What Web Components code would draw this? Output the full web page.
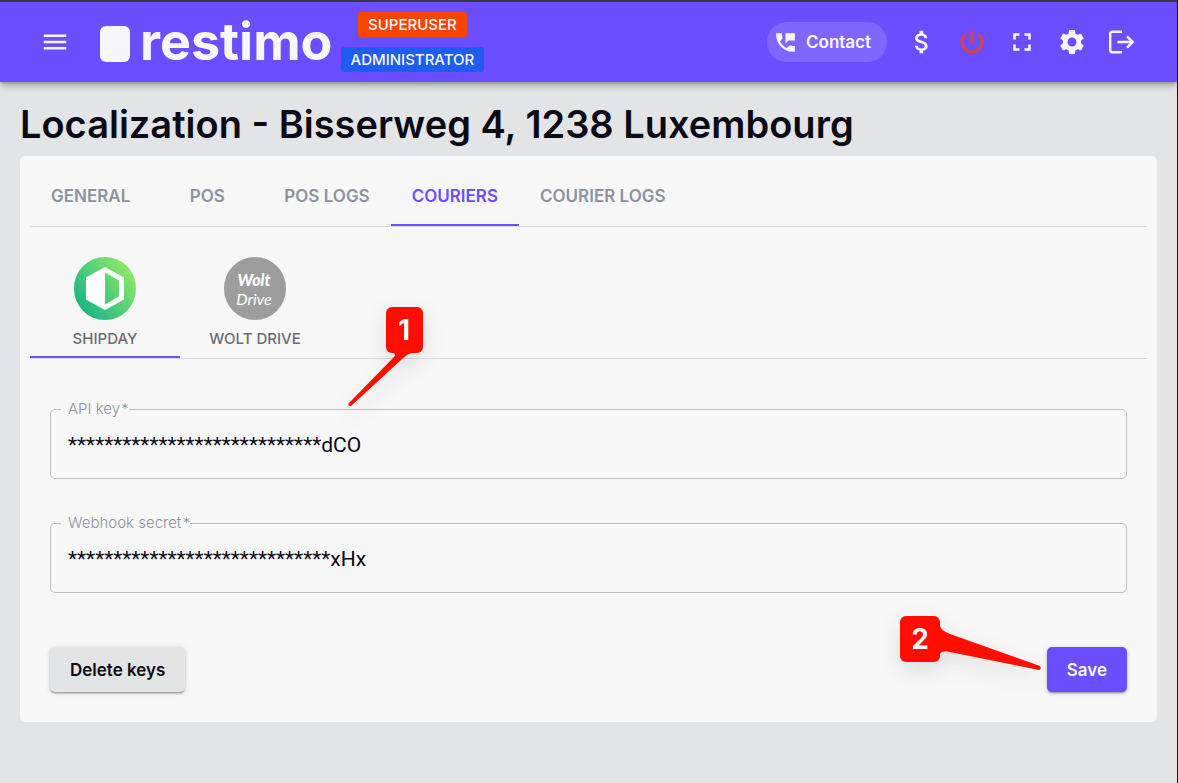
<!DOCTYPE html>
<html lang="en">
<head>
<meta charset="utf-8">
<title>Restimo – Localization</title>
<style>
  html { background: #e3e4e6; }
  body {
    margin: 0;
    font-family: Inter, "Liberation Sans", sans-serif;
    color: #0c0a17;
    --brand: #6b4eff;
    --panel: #f7f7f7;
    --grey: #e3e4e6;
    --muted: #8c93a0;
  }
</style>
</head>
<body>
<app-shell>
  <app-header slot="header">
    <role-badge tone="orange">SUPERUSER</role-badge>
    <role-badge tone="blue">ADMINISTRATOR</role-badge>
  </app-header>
  <page-title>Localization - Bisserweg 4, 1238 Luxembourg</page-title>
  <settings-card>
    <tab-bar slot="tabs">
      <tab-item>GENERAL</tab-item>
      <tab-item>POS</tab-item>
      <tab-item>POS LOGS</tab-item>
      <tab-item selected>COURIERS</tab-item>
      <tab-item>COURIER LOGS</tab-item>
    </tab-bar>
    <tab-bar slot="tabs">
      <courier-tab selected label="SHIPDAY">
        <svg width="62" height="63" viewBox="0 0 62 63" aria-hidden="true">
          <defs><linearGradient id="g" x1="0.1" y1="0.85" x2="0.9" y2="0.2"><stop offset="0" stop-color="#17b584"/><stop offset="1" stop-color="#8be868"/></linearGradient></defs>
          <rect width="62" height="63" rx="31" fill="url(#g)"/>
          <path fill="#fff" fill-rule="evenodd" d="M31 10L50 20.500V42.500L31 53L12 42.500V20.500ZM31 15.500V47.500L45 39.500V23.500Z"/>
        </svg>
      </courier-tab>
      <courier-tab label="WOLT DRIVE"><wolt-logo></wolt-logo></courier-tab>
    </tab-bar>
    <outlined-field label="API key" value="****************************dCO">
      <step-callout number="1" direction="down"></step-callout>
    </outlined-field>
    <outlined-field label="Webhook secret" value="*****************************xHx"></outlined-field>
    <action-button slot="actions" kind="plain">Delete keys</action-button>
    <action-button slot="actions" kind="primary">Save
      <step-callout slot="callout" number="2" direction="right"></step-callout>
    </action-button>
  </settings-card>
</app-shell>

<script>
const define = (name, html, setup) => {
  const template = document.createElement('template');
  template.innerHTML = html;
  customElements.define(name, class extends HTMLElement {
    constructor() {
      super();
      this.attachShadow({ mode: 'open' }).append(template.content.cloneNode(true));
    }
    connectedCallback() { if (setup) setup(this, this.shadowRoot); }
  });
};

define('app-shell', `
  <style>
    :host { display: block; box-sizing: border-box; min-height: 100vh; border-top: 2px solid #3b3b4b; border-right: 1px solid #111; background: var(--grey); }
    main { padding: 20px 20px 60px; }
  </style>
  <slot name="header"></slot>
  <main><slot></slot></main>`);

define('app-header', `
  <style>
    :host { display: block; position: relative; background: var(--brand); color: #f7f7fb; box-shadow: 0 2px 4px -1px rgba(0,0,0,.3), 0 4px 8px rgba(0,0,0,.2); }
    header { display: flex; align-items: center; height: 80px; padding: 0 35px 0 40px; }
    .logo { display: flex; align-items: center; gap: 10px; margin-left: 30px; font-size: 52px; line-height: 64px; font-weight: 700; color: inherit; text-decoration: none; }
    .mark { width: 30px; height: 36px; margin-top: 4px; border-radius: 6px; background: #f7f7fb; }
    .roles { display: flex; flex-direction: column; align-items: center; gap: 10px; margin-left: 8px; }
    nav { display: flex; align-items: center; gap: 10px; margin-left: auto; }
    button { display: flex; align-items: center; justify-content: center; width: 40px; height: 40px; padding: 0; border: 0; border-radius: 20px; background: none; color: inherit; font: inherit; }
    button.menu { width: 30px; }
    button.contact { justify-content: flex-start; width: 120px; gap: 8px; margin-right: 5px; padding-left: 6px; background: #7f66ff; font-size: 17px; font-weight: 600; }
    svg { fill: currentColor; flex: none; }
    .power { color: #d4434a; }
  </style>
  <header>
    <button class="menu" aria-label="Menu"><svg width="30" height="30" viewBox="0 0 24 24"><path d="M3 18h18v-2H3v2zm0-5h18v-2H3v2zm0-7v2h18V6H3z"/></svg></button>
    <a class="logo" href="#"><span class="mark"></span><span>restimo</span></a>
    <div class="roles"><slot></slot></div>
    <nav>
      <button class="contact"><svg width="25" height="25" viewBox="0 0 24 24"><path d="M21 15.460l-5.270-.610-2.520 2.520c-2.830-1.440-5.150-3.750-6.590-6.590l2.530-2.530L8.540 3H3.030C2.450 13.180 10.820 21.550 21 20.970v-5.510zM12 3v10l3-3h6V3z"/></svg><span>Contact</span></button>
      <button aria-label="Billing"><svg width="30" height="30" viewBox="0 0 24 24"><path d="M11.800 10.900c-2.270-.590-3-1.200-3-2.150 0-1.090 1.010-1.850 2.700-1.850 1.780 0 2.440.850 2.500 2.100h2.210c-.070-1.720-1.120-3.300-3.210-3.810V3h-3v2.160c-1.940.420-3.500 1.680-3.500 3.610 0 2.310 1.910 3.460 4.700 4.130 2.500.600 3 1.480 3 2.410 0 .690-.490 1.790-2.700 1.790-2.060 0-2.870-.920-2.980-2.100h-2.200c.120 2.190 1.760 3.420 3.680 3.830V21h3v-2.150c1.950-.370 3.500-1.500 3.500-3.550 0-2.840-2.430-3.810-4.700-4.400z"/></svg></button>
      <button class="power" aria-label="Power"><svg width="30" height="30" viewBox="0 0 24 24" stroke="currentColor" stroke-width=".5"><path d="M13 3h-2v10h2V3zm4.830 2.170l-1.420 1.420C17.990 7.860 19 9.810 19 12c0 3.870-3.130 7-7 7s-7-3.130-7-7c0-2.190 1.010-4.140 2.580-5.420L6.170 5.170C4.230 6.820 3 9.260 3 12c0 4.970 4.030 9 9 9s9-4.030 9-9c0-2.740-1.230-5.180-3.170-6.830z"/></svg></button>
      <button aria-label="Full screen"><svg width="30" height="30" viewBox="0 0 24 24"><path d="M7 14H5v5h5v-2H7v-3zm-2-4h2V7h3V5H5v5zm12 7h-3v2h5v-5h-2v3zM14 5v2h3v3h2V5h-5z"/></svg></button>
      <button aria-label="Settings"><svg width="30" height="30" viewBox="0 0 24 24"><path d="M19.140 12.940c.040-.300.060-.610.060-.940 0-.320-.020-.640-.070-.940l2.030-1.580c.180-.140.230-.410.120-.610l-1.920-3.320c-.120-.220-.370-.290-.590-.220l-2.390.960c-.500-.380-1.030-.700-1.620-.940l-.360-2.540c-.040-.240-.240-.410-.480-.410h-3.840c-.240 0-.430.170-.470.410l-.360 2.540c-.590.240-1.130.570-1.620.940l-2.390-.960c-.220-.080-.470 0-.590.220L2.740 8.870c-.120.210-.080.470.120.610l2.030 1.580c-.050.300-.090.630-.090.940s.020.640.070.940l-2.030 1.580c-.180.140-.230.410-.120.610l1.920 3.320c.120.220.370.290.590.220l2.390-.960c.500.380 1.030.700 1.620.940l.360 2.540c.050.240.240.410.480.410h3.840c.240 0 .440-.170.470-.410l.360-2.540c.590-.240 1.130-.560 1.620-.940l2.390.960c.220.080.470 0 .590-.220l1.920-3.320c.120-.220.070-.470-.120-.610l-2.010-1.580zM12 15.600c-1.980 0-3.600-1.620-3.600-3.600s1.620-3.600 3.600-3.600 3.600 1.620 3.600 3.600-1.620 3.600-3.600 3.600z"/></svg></button>
      <button aria-label="Log out"><svg width="30" height="30" viewBox="0 0 30 30"><path fill="none" stroke="currentColor" stroke-width="2.400" d="M15 4.700H5.500Q3.200 4.700 3.200 7V23Q3.200 25.300 5.500 25.300H15M10.500 15H26M20 9.300L25.700 15L20 20.700"/></svg></button>
    </nav>
  </header>`);

define('role-badge', `
  <style>
    :host { display: block; height: 25px; padding: 0 10px; border-radius: 3px; color: #f7f7fb; font-size: 15px; line-height: 25px; font-weight: 500; background: #f84500; }
    :host([tone="blue"]) { background: #1f5cf0; }
  </style><slot></slot>`);

define('page-title', `
  <style>
    :host { display: block; }
    h1 { margin: 0; font-size: 38px; line-height: 44px; font-weight: 600; }
  </style><h1><slot></slot></h1>`);

define('settings-card', `
  <style>
    :host { display: block; margin-top: 10px; padding: 10px 10px 30px; border-radius: 5px; background: var(--panel); }
    .fields { display: flex; flex-direction: column; gap: 35px; padding: 41px 20px 0; }
    .actions { display: flex; justify-content: space-between; padding: 54px 20px 0; }
  </style>
  <slot name="tabs"></slot>
  <div class="fields"><slot></slot></div>
  <div class="actions"><slot name="actions"></slot></div>`);

define('tab-bar', `
  <style>:host { display: flex; border-bottom: 1px solid #d8d9db; }</style><slot></slot>`,
  host => host.setAttribute('role', 'tablist'));

define('tab-item', `
  <style>
    :host { display: block; }
    button { display: block; box-sizing: border-box; min-width: 112px; height: 60px; padding: 2px 21px 0; border: 0; border-bottom: 2px solid transparent; background: none; color: var(--muted); font: 600 17px/56px Inter, sans-serif; white-space: nowrap; }
    :host([selected]) button { border-color: var(--brand); color: var(--brand); }
  </style><button role="tab"><slot></slot></button>`);

define('courier-tab', `
  <style>
    :host { display: block; }
    button { display: flex; flex-direction: column; align-items: center; gap: 8px; box-sizing: border-box; width: 150px; height: 131px; padding: 30px 0 0; border: 0; border-bottom: 2px solid transparent; background: none; color: #6d6c74; font: 500 15px/22px Inter, sans-serif; }
    :host([selected]) button { border-color: var(--brand); }
    ::slotted(*) { display: block; }
  </style><button role="tab"><slot></slot><span></span></button>`,
  (host, root) => { root.querySelector('span').textContent = host.getAttribute('label'); });

define('wolt-logo', `
  <style>
    :host { display: block; box-sizing: border-box; width: 62px; height: 63px; padding: 13px 2px 0 0; border-radius: 31px; background: #9d9d9d; color: #fff; font: italic 400 16px/19px Lato, sans-serif; text-align: center; }
    b, span { display: block; }
    b { font-weight: 900; }
  </style><b>Wolt</b><span>Drive</span>`);

define('outlined-field', `
  <style>
    :host { display: block; position: relative; }
    fieldset { min-width: 0; margin: 0; padding: 0; border: 1px solid #bcbdc0; border-radius: 5px; }
    legend { margin-left: 10px; padding: 0 0 0 7px; color: var(--muted); font-size: 15px; line-height: 18px; font-weight: 300; }
    input { display: block; box-sizing: border-box; width: 100%; height: 60px; padding: 0 17px 7px; border: 0; outline: 0; background: none; color: inherit; font: 400 21px/28px Roboto, sans-serif; }
  </style>
  <fieldset><legend><label for="f"></label></legend><input id="f" type="text"></fieldset><slot></slot>`,
  (host, root) => {
    root.querySelector('label').textContent = host.getAttribute('label') + '\u200a*';
    root.querySelector('input').value = host.getAttribute('value');
  });

define('action-button', `
  <style>
    :host { display: block; position: relative; }
    button { display: block; height: 45px; padding: 2px 20px 0; border: 0; border-radius: 5px; background: var(--grey); color: inherit; font: 600 17px/43px Inter, sans-serif; box-shadow: 0 2px 2px -1px rgba(0,0,0,.35), 0 1px 4px rgba(0,0,0,.2); }
    :host([kind="primary"]) button { background: var(--brand); color: #f7f7fb; }
  </style><button type="button"><slot></slot></button><slot name="callout"></slot>`);

define('step-callout', `
  <style>
    :host { position: absolute; pointer-events: none; filter: drop-shadow(0 8px 10px rgba(0,0,0,.1)); }
    :host([direction="down"]) { left: 298px; top: -93px; }
    :host([direction="right"]) { right: 86px; top: -31px; }
    svg { display: block; fill: #ff0d00; }
    span { position: absolute; top: 0; width: 38px; color: #fff; font-size: 28px; line-height: 46px; font-weight: 700; text-align: center; }
    :host([direction="down"]) span { right: 0; }
    :host([direction="right"]) span { left: 0; width: 40px; }
  </style><div></div><span></span>`,
  (host, root) => {
    const down = host.getAttribute('direction') === 'down';
    root.querySelector('div').innerHTML = down
      ? '<svg width="75" height="100" viewBox="0 0 75 100"><rect x="38" width="37" height="46" rx="6"/><path d="M43 45Q49 46 46 50L1 96Q-1 99 3 99L53 53Q60 46 67 45Z"/></svg>'
      : '<svg width="141" height="55" viewBox="0 0 141 55"><rect width="40" height="46" rx="6"/><path d="M39 6C40 14 44 15 50 18L140 50Q142 53 139 54L50 36Q43 34 39 38Z"/></svg>';
    root.querySelector('span').textContent = host.getAttribute('number');
  });
</script>
</body>
</html>
